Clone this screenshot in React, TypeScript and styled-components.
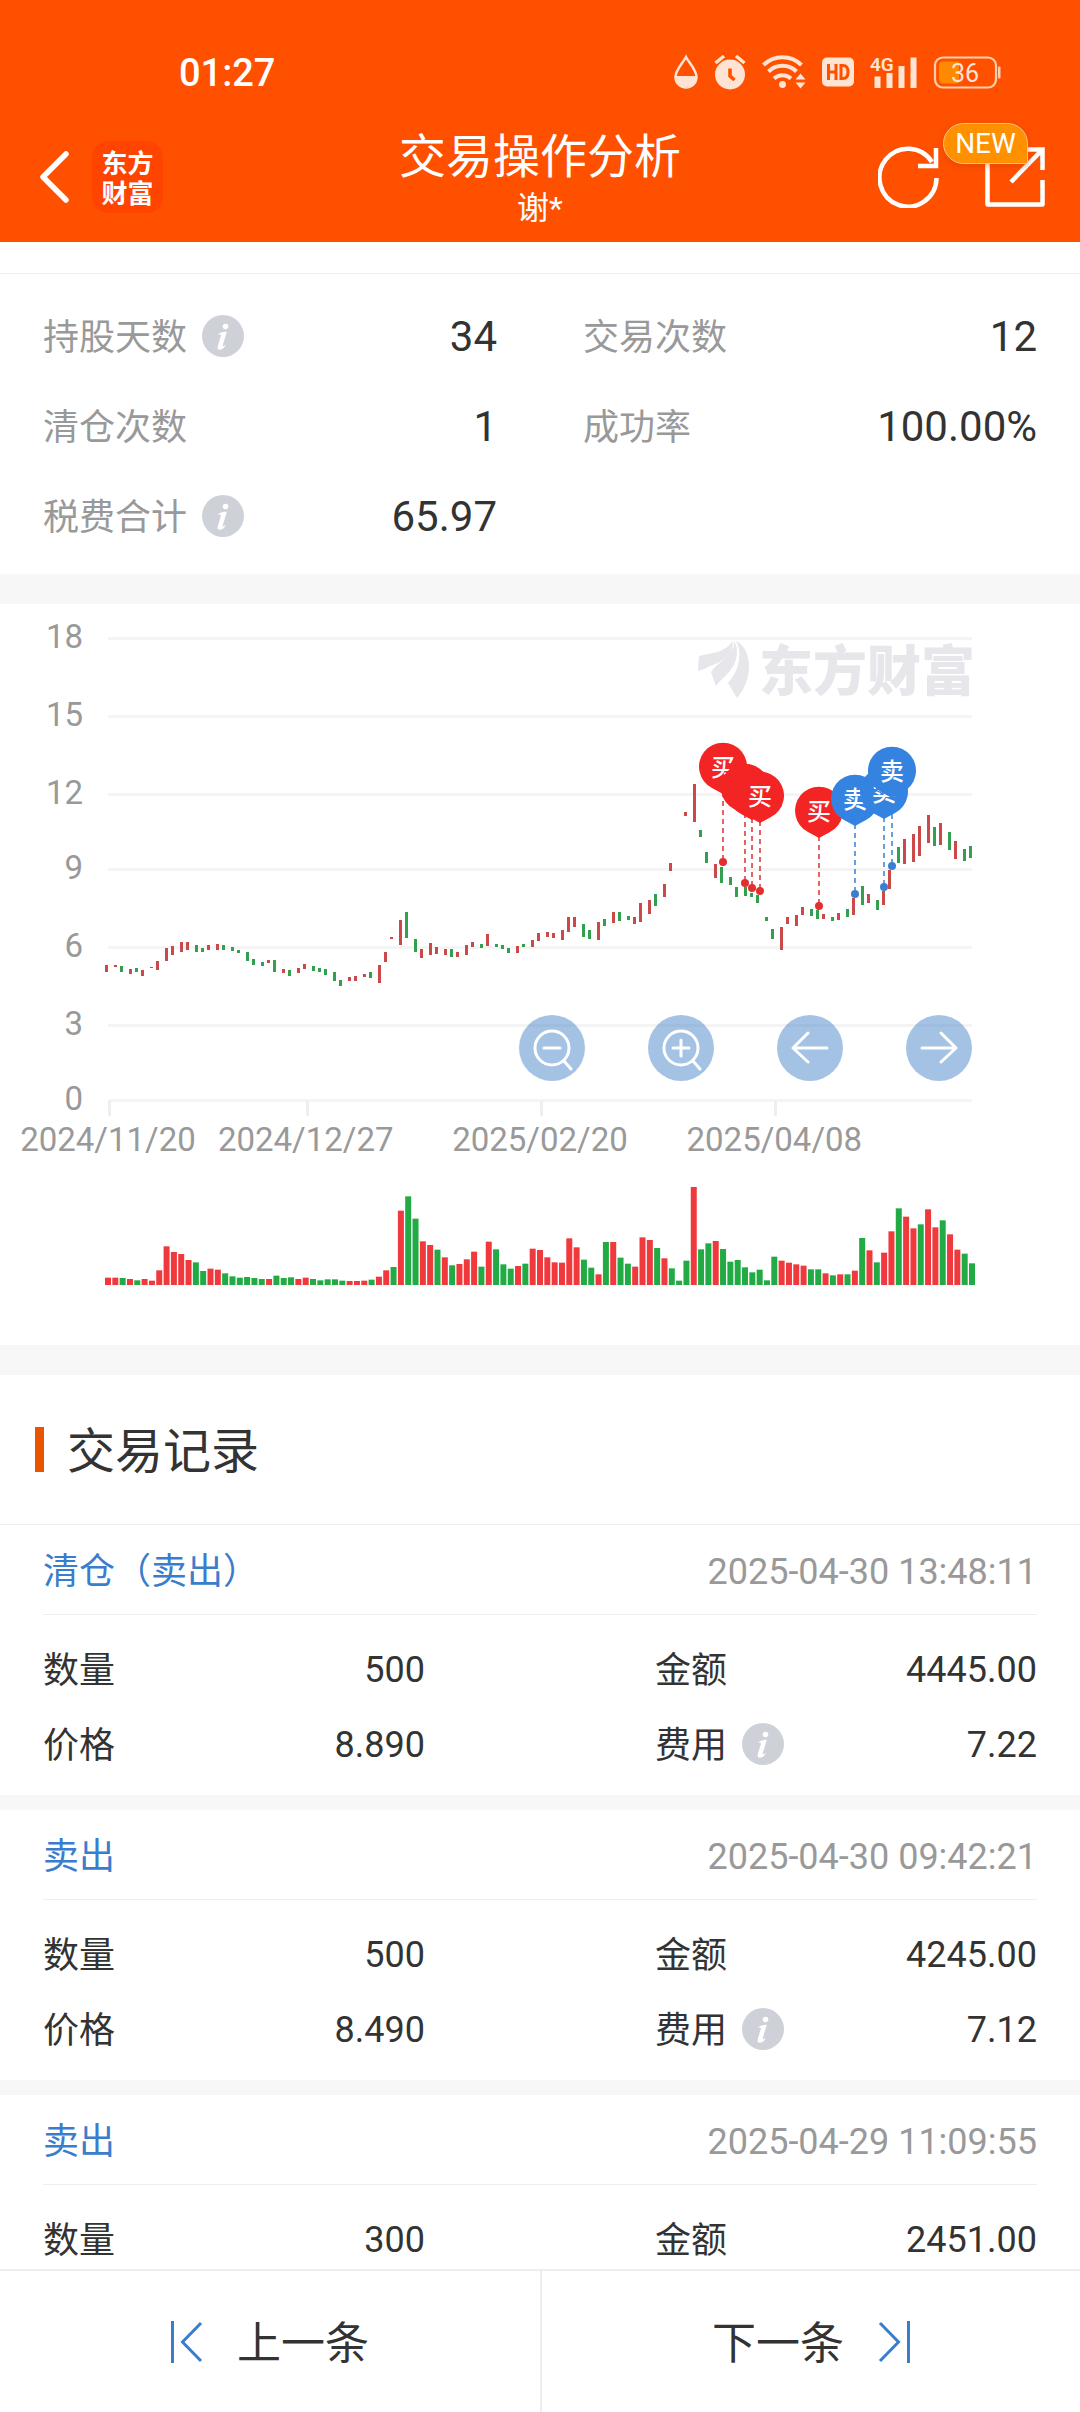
import React from "react";
import styled, { createGlobalStyle } from "styled-components";

const GlobalStyle = createGlobalStyle`
  *, *::before, *::after { box-sizing: border-box; }
  body {
    margin: 0;
    background: #ffffff;
    color: #333333;
    font-family: Roboto, "Noto Sans CJK SC", sans-serif;
  }
  button { font: inherit; color: inherit; border: 0; padding: 0; background: none; cursor: pointer; }
  h1, h2, h3, p, dl, dt, dd { margin: 0; font-weight: 400; }
`;

/* ---------- data ---------- */

type Side = "buy" | "sell";

/* direction, top and bottom of each daily bar; three units to a pixel, zero at CANDLE_ZERO */
const CANDLES = `
r196,216 r196,203 g199,217 r207,221 g204,215 r210,227 r202,206 r183,209 r143,181 r139,167
r127,156 r127,150 g135,155 g145,157 r135,150 r132,150 g135,149 g142,153 g151,161 g156,182
g177,194 g186,198 r181,189 g181,218 r207,218 g211,230 r204,219 r193,209 g199,215 g204,217
g207,224 g216,243 g240,258 r232,244 r229,245 r223,233 g216,233 r196,249 r156,185 r111,117
r61,135 g36,114 g118,156 r147,173 r130,167 r141,162 r147,164 g148,171 r156,170 r134,163
r127,142 g132,143 r102,137 g132,141 g136,149 g145,160 r138,158 g133,143 r121,143 r100,123
r97,113 r99,115 r91,120 r52,98 r52,83 g72,112 g91,117 r67,122 g58,78 r37,70
g37,63 g49,62 r52,74 r9,65 r1,44 g-18,17 r-47,-8 r-111,-87 r0,0 r-263,-252
r-348,-233 g-209,-189 g-143,-110 r-108,-67 g-100,-52 g-69,-46 g-39,-10 g-39,-13 g-22,-10 g-15,10
g51,63 g88,118 r81,150 r52,72 r45,77 r22,47 g26,48 g30,58 r43,58 g51,62
r40,62 g28,52 r-6,45 g-41,16 r-17,11 g1,31 r-27,15 r-90,-34 g-158,-109 r-182,-106
r-197,-113 r-221,-131 r-254,-171 g-218,-160 r-230,-165 g-205,-151 r-176,-123 g-153,-117 g-161,-126`
  .trim()
  .split(/\s+/)
  .map((item) => {
    const [top, bottom] = item.slice(1).split(",").map(Number);
    return { up: item[0] === "r", top, bottom };
  });

/* direction and height of each volume bar, three units to a pixel */
const VOLUMES = `
r22 r22 g21 r18 g14 r18 r13 r44 r116 r99 r93 r75 g68 g42 r49 r46 g35 g26 g22 g24
g21 g18 r18 g28 g21 g23 r18 r22 g18 g14 g17 g17 g13 r12 r12 r13 g16 r25 r44 g54
r223 g266 g199 r131 r120 g106 r83 g59 r63 r77 r100 g55 r130 g107 g62 g49 r57 g64 r109 r105
r83 r68 r67 r140 r113 g76 g52 r32 g129 r129 g82 g64 r55 r143 r135 g111 r80 g50 g13 g73
r294 g107 g125 r132 g108 g70 g75 g53 g38 g46 g14 g85 r73 r67 r62 r58 g47 g47 r35 g29
r32 g32 r43 g141 r104 g68 r97 r161 g230 r205 r170 g182 r227 r173 g194 r152 r106 g94 g65`
  .trim()
  .split(/\s+/)
  .map((item) => ({ up: item[0] === "r", height: Number(item.slice(1)) }));

const GRID = [
  { label: "18", y: 34 },
  { label: "15", y: 112 },
  { label: "12", y: 190 },
  { label: "9", y: 265 },
  { label: "6", y: 343 },
  { label: "3", y: 421 },
  { label: "0", y: 496 },
];

const DATES = [
  { label: "2024/11/20", day: 0 },
  { label: "2024/12/27", day: 27 },
  { label: "2025/02/20", day: 59 },
  { label: "2025/04/08", day: 91 },
];

const TRADES: { x: number; y: number; side: Side }[] = [
  { x: 723, y: 258, side: "buy" },
  { x: 745, y: 279, side: "buy" },
  { x: 752, y: 284, side: "buy" },
  { x: 760, y: 287, side: "buy" },
  { x: 819, y: 302, side: "buy" },
  { x: 855, y: 290, side: "sell" },
  { x: 884, y: 283, side: "sell" },
  { x: 892, y: 262, side: "sell" },
];

const STATS = [
  { label: "持股天数", value: "34", info: true },
  { label: "交易次数", value: "12" },
  { label: "清仓次数", value: "1" },
  { label: "成功率", value: "100.00%" },
  { label: "税费合计", value: "65.97", info: true },
];

const RECORDS = [
  { kind: "清仓（卖出）", time: "2025-04-30 13:48:11", count: "500", amount: "4445.00", price: "8.890", fee: "7.22" },
  { kind: "卖出", time: "2025-04-30 09:42:21", count: "500", amount: "4245.00", price: "8.490", fee: "7.12" },
  { kind: "卖出", time: "2025-04-29 11:09:55", count: "300", amount: "2451.00", price: "8.170", fee: "6.23" },
];

/* ---------- layout ---------- */

const Page = styled.div`
  display: flex;
  flex-direction: column;
  height: 100vh;
`;

const Header = styled.header`
  flex: none;
  background: #ff5000;
  color: #ffffff;
`;

const StatusBar = styled.div`
  display: flex;
  align-items: center;
  justify-content: space-between;
  height: 96px;
  padding: 48px 79px 0 179px;
`;

const Clock = styled.span`
  padding-top: 2px;
  font-size: 38px;
  line-height: 46px;
  font-weight: 500;
`;

const StatusIcons = styled.div`
  display: flex;
  align-items: center;
  gap: 16px;
  svg { display: block; overflow: visible; }
`;

const NavBar = styled.div`
  display: grid;
  grid-template-columns: 1fr auto 1fr;
  align-items: center;
  height: 146px;
  padding: 16px 35px 0;
`;

const NavSide = styled.div<{ $end?: boolean; $gap: number }>`
  display: flex;
  align-items: center;
  justify-content: ${(p) => (p.$end ? "flex-end" : "flex-start")};
  gap: ${(p) => p.$gap}px;
`;

const IconButton = styled.button`
  position: relative;
  display: block;
  svg { display: block; }
`;

const BackButton = styled(IconButton)`
  padding-left: 5px;
`;

const LogoTile = styled.span`
  display: grid;
  place-content: center;
  width: 71px;
  height: 72px;
  border-radius: 16px;
  background: #ff4400;
  font-family: "Noto Sans CJK SC", sans-serif;
  font-size: 26px;
  line-height: 30px;
  font-weight: 700;
  text-align: center;
`;

const TitleBlock = styled.div`
  padding-top: 6px;
  text-align: center;
`;

const Title = styled.h1`
  font-size: 47px;
  line-height: 56px;
`;

const Subtitle = styled.p`
  font-size: 32px;
  line-height: 46px;
`;

const NewBadge = styled.span`
  position: absolute;
  left: -42px;
  top: -24px;
  width: 85px;
  height: 41px;
  border: 1px solid #ffc080;
  border-radius: 21px 21px 2px 21px;
  background: #ff9000;
  box-shadow: 0 2px 6px rgba(190, 60, 0, 0.4);
  font-size: 28px;
  line-height: 40px;
  text-align: center;
`;

const Content = styled.main`
  flex: 1;
  min-height: 0;
  overflow-y: auto;
  scrollbar-width: none;
  padding-top: 31px;
`;

const Band = styled.div<{ $height: number }>`
  height: ${(p) => p.$height}px;
  background: #f7f7f7;
`;

const StatGrid = styled.dl`
  display: grid;
  grid-template-columns: 1fr 1fr;
  column-gap: 86px;
  padding: 18px 43px 12px;
  border-top: 1px solid #eeeeee;
`;

const Pair = styled.div<{ $height: number }>`
  display: flex;
  align-items: center;
  justify-content: space-between;
  height: ${(p) => p.$height}px;
`;

const Term = styled.dt<{ $muted?: boolean }>`
  display: flex;
  align-items: center;
  gap: 15px;
  font-size: 36px;
  line-height: 48px;
  color: ${(p) => (p.$muted ? "#999999" : "#333333")};
`;

const TermText = styled.span`
  padding-top: 2px;
`;

const Value = styled.dd<{ $large?: boolean }>`
  font-size: ${(p) => (p.$large ? 42 : 36)}px;
  line-height: 48px;
`;

const InfoButton = styled.button`
  display: block;
  padding-bottom: 2px;
  svg { display: block; }
`;

const ChartPanel = styled.section`
  position: relative;
`;

const ChartDrawing = styled.svg`
  display: block;
  width: 100%;
  height: auto;
`;

const ChartTools = styled.div`
  position: absolute;
  right: 10%;
  bottom: 264px;
  display: flex;
  gap: 63px;
`;

const ToolButton = styled.button`
  width: 66px;
  height: 66px;
  border-radius: 50%;
  background: rgba(60, 125, 198, 0.47);
  svg { display: block; }
`;

const SectionTitle = styled.h2`
  display: flex;
  align-items: center;
  gap: 23px;
  height: 149px;
  padding: 0 35px;
  font-size: 48px;
  line-height: 64px;
  &::before {
    content: "";
    width: 9px;
    height: 45px;
    background: #e85400;
  }
`;

const SectionText = styled.span`
  padding-top: 4px;
`;

const Record = styled.article`
  border-top: 1px solid #eeeeee;
  padding: 0 43px 13px;
`;

const RecordList = styled.div`
  display: flex;
  flex-direction: column;
  ${Record} + ${Record} {
    border-top: 15px solid #f7f7f7;
  }
`;

const RecordHead = styled.div`
  display: flex;
  align-items: center;
  justify-content: space-between;
  height: 90px;
  padding-top: 5px;
  border-bottom: 1px solid #eeeeee;
`;

const RecordKind = styled.h3`
  font-size: 36px;
  line-height: 48px;
  color: #3a7dcc;
`;

const RecordTime = styled.time`
  font-size: 36px;
  line-height: 48px;
  color: #999999;
`;

const RecordBody = styled.dl`
  display: grid;
  grid-template-columns: 1fr 1fr;
  column-gap: 230px;
  padding-top: 17px;
`;

const Footer = styled.footer`
  flex: none;
  display: grid;
  grid-template-columns: 1fr 1fr;
  height: 143px;
  border-top: 2px solid #eeeeee;
  background: #ffffff;
`;

const StepButton = styled.button`
  display: flex;
  align-items: center;
  justify-content: center;
  gap: 34px;
  font-size: 44px;
  line-height: 56px;
  & + & { border-left: 2px solid #eeeeee; }
`;

const StepText = styled.span`
  padding-top: 4px;
`;

/* ---------- icons ---------- */

const PALE = "#ffe3d3";

const StatusIconSet = () => (
  <StatusIcons aria-label="状态栏">
    <svg width="24" height="34" viewBox="0 0 24 34">
      <path d="M12 2 C15 8 22.500 15 22.500 22 A10.500 10.500 0 0 1 1.500 22 C1.500 15 9 8 12 2Z" fill="none" stroke={PALE} strokeWidth="2.500" />
      <path d="M1 21 H23 A11 11.500 0 0 1 1 22Z" fill={PALE} />
    </svg>
    <svg width="32" height="36" viewBox="0 0 32 36">
      <circle cx="16" cy="20.500" r="15" fill={PALE} />
      <path d="M1.500 9 L10 2 M30.500 9 L22 2" stroke={PALE} strokeWidth="3.400" />
      <path d="M16 14.500 V22 L20.500 26" fill="none" stroke="#ff5000" strokeWidth="3.600" />
    </svg>
    <svg width="44" height="36" viewBox="0 0 44 36">
      <g fill="none" stroke={PALE} strokeWidth="4">
        <path d="M1.500 11 A27 27 0 0 1 39.500 11" />
        <path d="M6.500 17.500 A20 20 0 0 1 34.500 17.500" />
        <path d="M12 24.500 A12.500 12.500 0 0 1 29 24.500" />
      </g>
      <circle cx="20.500" cy="30.500" r="3.400" fill={PALE} />
      <path d="M38.500 19.500 L43.500 25.500 H33.500Z M38.500 34.500 L43.500 28.500 H33.500Z" fill={PALE} />
    </svg>
    <svg width="32" height="30" viewBox="0 0 32 30">
      <rect width="32" height="29" y="0.500" rx="5" fill={PALE} />
      <path d="M6.500 7 V23 M14 7 V23 M6.500 15 H14 M19 7 V23 M17.500 8.500 H21 Q26 8.500 26 15 Q26 21.500 21 21.500 H17.500" fill="none" stroke="#ff5000" strokeWidth="3" />
    </svg>
    <svg width="48" height="34" viewBox="0 0 48 34">
      <text x="0" y="16" fill={PALE} fontFamily="Roboto, sans-serif" fontSize="19" fontWeight="600">4G</text>
      <path d="M4.500 21.500 H10.500 V33 H4.500Z M16.500 18 H22.500 V33 H16.500Z M28.500 11 H34.500 V33 H28.500Z M40.500 2.500 H46.500 V33 H40.500Z" fill={PALE} />
    </svg>
    <svg width="67" height="33" viewBox="0 0 67 33">
      <rect x="1" y="1.500" width="61" height="30" rx="8" fill="none" stroke="#ffcfae" strokeWidth="2.200" />
      <path d="M9 5.500 H25 V27.500 H9 Q5 27.500 5 23.500 V9.500 Q5 5.500 9 5.500Z" fill="#ff8a00" />
      <rect x="64" y="10.500" width="2.500" height="12" rx="1" fill="#ffcfae" />
      <text x="17" y="25.500" fill={PALE} fontFamily="Roboto, sans-serif" fontSize="25">36</text>
    </svg>
  </StatusIcons>
);

const InfoMark = () => (
  <InfoButton type="button" aria-label="说明">
    <svg width="42" height="42" viewBox="0 0 42 42">
      <circle cx="21" cy="21" r="21" fill="#ced1d8" />
      <circle cx="23.500" cy="11.500" r="2.800" fill="#fff" />
      <path d="M15.500 20 Q19 16.500 24.800 16.800 L20.800 30 Q20.200 32.600 24 29.800 Q21.500 34.800 17.600 34.800 Q14.800 34.600 15.800 31 L19 20.500 Q18.500 19 15.500 20Z" fill="#fff" />
    </svg>
  </InfoButton>
);

const ToolIcon = ({ children }: { children: React.ReactNode }) => (
  <svg width="66" height="66" viewBox="0 0 66 66" fill="none" stroke="#fff" strokeWidth="3" strokeLinecap="round" strokeLinejoin="round">
    {children}
  </svg>
);

/* ---------- chart ---------- */

const PLOT_LEFT = 108;
const PLOT_RIGHT = 972;
const CANDLE_ZERO = 296;
const VOLUME_BASE = 681;
const dayStep = (PLOT_RIGHT - PLOT_LEFT) / (CANDLES.length - 1);

const Pin = ({ x, y, side }: { x: number; y: number; side: Side }) => {
  const color = side === "buy" ? "#f22424" : "#3583e0";
  const cy = y - 95;
  return (
    <g>
      <path d={`M${x - 11} ${cy + 21} A24 24 0 1 1 ${x + 11} ${cy + 21} L${x} ${cy + 27}Z`} fill={color} />
      <text x={x} y={cy + 9} textAnchor="middle" fontFamily="'Noto Sans CJK SC', sans-serif" fontSize="24" fontWeight="500" fill="#fff">
        {side === "buy" ? "买" : "卖"}
      </text>
    </g>
  );
};

const Chart = () => (
  <ChartDrawing viewBox="0 0 1080 741" role="img" aria-label="股价与买卖点">
    {GRID.map((g) => (
      <g key={g.label}>
        <rect x={PLOT_LEFT} y={g.y - 1} width={PLOT_RIGHT - PLOT_LEFT} height="3" fill="#f4f4f4" />
        <text x="83" y={g.y + 10} textAnchor="end" fontSize="33" fill="#999">{g.label}</text>
      </g>
    ))}
    {DATES.map((d) => (
      <g key={d.label}>
        <rect x={Math.round(PLOT_LEFT + d.day * dayStep)} y="497" width="3" height="15" fill="#eee" />
        <text x={PLOT_LEFT + d.day * dayStep} y="547" textAnchor="middle" fontSize="33" fill="#999">{d.label}</text>
      </g>
    ))}

    <g fill="#e6e6eb">
      <path d="M698 67 L699 52 C712 49 724 49 733 37 C733 53 721 58 710 62 C706 64 703 66 698 67Z" />
      <path d="M716 82 L711 68 C716 60 724 57 729 50 C733 45 735 41 734 37 C739 44 738 58 729 68 C724 74 719 77 716 82Z" />
      <path d="M736 37 C745 41 749 52 749 62 C749 75 744 86 737 94 L728 79 C733 73 738 65 739 56 C740 48 739 42 736 37Z" />
      <text x="759" y="87" fontFamily="'Noto Sans CJK SC', sans-serif" fontSize="54" fontWeight="900">东方财富</text>
    </g>

    {CANDLES.map((c, i) => (
      <rect
        key={i}
        x={105 + 3 * Math.floor((i * dayStep) / 3 + 0.76)}
        y={Math.round(CANDLE_ZERO + c.top / 3)}
        width="3"
        height={Math.round((c.bottom - c.top) / 3)}
        fill={c.up ? "#cb4949" : "#33a04f"}
      />
    ))}

    {TRADES.map((t, i) => {
      const color = t.side === "buy" ? "#e03030" : "#3a80d2";
      return (
        <g key={i}>
          <line x1={t.x} y1={t.y - 70} x2={t.x} y2={t.y} stroke={color} strokeWidth="1.500" strokeDasharray="5 4" />
          <circle cx={t.x} cy={t.y} r="4" fill={color} />
        </g>
      );
    })}
    {TRADES.map((t, i) => (
      <Pin key={i} {...t} />
    ))}

    {VOLUMES.map((v, i) => (
      <rect key={i} x={PLOT_LEFT - 3 + i * dayStep} y={VOLUME_BASE - v.height / 3} width="6" height={v.height / 3} fill={v.up ? "#f0393c" : "#22aa44"} />
    ))}
  </ChartDrawing>
);

/* ---------- page ---------- */

export default function App() {
  return (
    <Page>
      <GlobalStyle />
      <Header>
        <StatusBar>
          <Clock>01:27</Clock>
          <StatusIconSet />
        </StatusBar>
        <NavBar>
          <NavSide $gap={23}>
            <BackButton type="button" aria-label="返回">
              <svg width="29" height="54" viewBox="0 0 29 54" fill="none" stroke="#fff" strokeWidth="5.500" strokeLinecap="round" strokeLinejoin="round">
                <path d="M26 4 L3 27 L26 50" />
              </svg>
            </BackButton>
            <LogoTile>东方<br />财富</LogoTile>
          </NavSide>
          <TitleBlock>
            <Title>交易操作分析</Title>
            <Subtitle>谢*</Subtitle>
          </TitleBlock>
          <NavSide $end $gap={46}>
            <IconButton type="button" aria-label="刷新">
              <svg width="61" height="62" viewBox="0 0 61 62" fill="none" stroke="#fff" strokeWidth="4.500">
                <path d="M58.500 32 A28.500 29 0 1 1 54 16" />
                <path d="M58 2 V20 H40" />
              </svg>
            </IconButton>
            <IconButton type="button" aria-label="分享">
              <svg width="60" height="60" viewBox="0 0 60 60" fill="none" stroke="#fff" strokeWidth="4.500" strokeLinejoin="round">
                <path d="M26 2.500 H2.500 V57.500 H57.500 V33" />
                <path d="M36 2.500 H57.500 V23 M57 3 L26 35" strokeLinejoin="miter" />
              </svg>
              <NewBadge>NEW</NewBadge>
            </IconButton>
          </NavSide>
        </NavBar>
      </Header>

      <Content>
        <StatGrid>
          {STATS.map((s) => (
            <Pair key={s.label} $height={90}>
              <Term $muted>
                <TermText>{s.label}</TermText>
                {s.info && <InfoMark />}
              </Term>
              <Value $large>{s.value}</Value>
            </Pair>
          ))}
        </StatGrid>
        <Band $height={30} />
        <ChartPanel>
          <Chart />
          <ChartTools>
            <ToolButton type="button" aria-label="缩小">
              <ToolIcon>
                <circle cx="33" cy="33" r="17" />
                <path d="M25 33 H41 M45 46 L52 54" />
              </ToolIcon>
            </ToolButton>
            <ToolButton type="button" aria-label="放大">
              <ToolIcon>
                <circle cx="33" cy="33" r="17" />
                <path d="M25 33 H41 M33 25 V41 M45 46 L52 54" />
              </ToolIcon>
            </ToolButton>
            <ToolButton type="button" aria-label="左移">
              <ToolIcon>
                <path d="M50 33 H16 M31 18 L16 33 L31 47" />
              </ToolIcon>
            </ToolButton>
            <ToolButton type="button" aria-label="右移">
              <ToolIcon>
                <path d="M16 33 H50 M35 18 L50 33 L35 47" />
              </ToolIcon>
            </ToolButton>
          </ChartTools>
        </ChartPanel>
        <Band $height={30} />
        <SectionTitle>
          <SectionText>交易记录</SectionText>
        </SectionTitle>
        <RecordList>
          {RECORDS.map((r) => (
            <Record key={r.time}>
              <RecordHead>
                <RecordKind>{r.kind}</RecordKind>
                <RecordTime>{r.time}</RecordTime>
              </RecordHead>
              <RecordBody>
                <Pair $height={75}>
                  <Term><TermText>数量</TermText></Term>
                  <Value>{r.count}</Value>
                </Pair>
                <Pair $height={75}>
                  <Term><TermText>金额</TermText></Term>
                  <Value>{r.amount}</Value>
                </Pair>
                <Pair $height={75}>
                  <Term><TermText>价格</TermText></Term>
                  <Value>{r.price}</Value>
                </Pair>
                <Pair $height={75}>
                  <Term>
                    <TermText>费用</TermText>
                    <InfoMark />
                  </Term>
                  <Value>{r.fee}</Value>
                </Pair>
              </RecordBody>
            </Record>
          ))}
        </RecordList>
      </Content>

      <Footer>
        <StepButton type="button">
          <svg width="32" height="42" viewBox="0 0 32 42" fill="none" stroke="#3a7dcc" strokeWidth="3">
            <path d="M1.500 0 V42 M30 2 L11.500 21 L30 40" />
          </svg>
          <StepText>上一条</StepText>
        </StepButton>
        <StepButton type="button">
          <StepText>下一条</StepText>
          <svg width="32" height="42" viewBox="0 0 32 42" fill="none" stroke="#3a7dcc" strokeWidth="3">
            <path d="M30.500 0 V42 M2 2 L20.500 21 L2 40" />
          </svg>
        </StepButton>
      </Footer>
    </Page>
  );
}
